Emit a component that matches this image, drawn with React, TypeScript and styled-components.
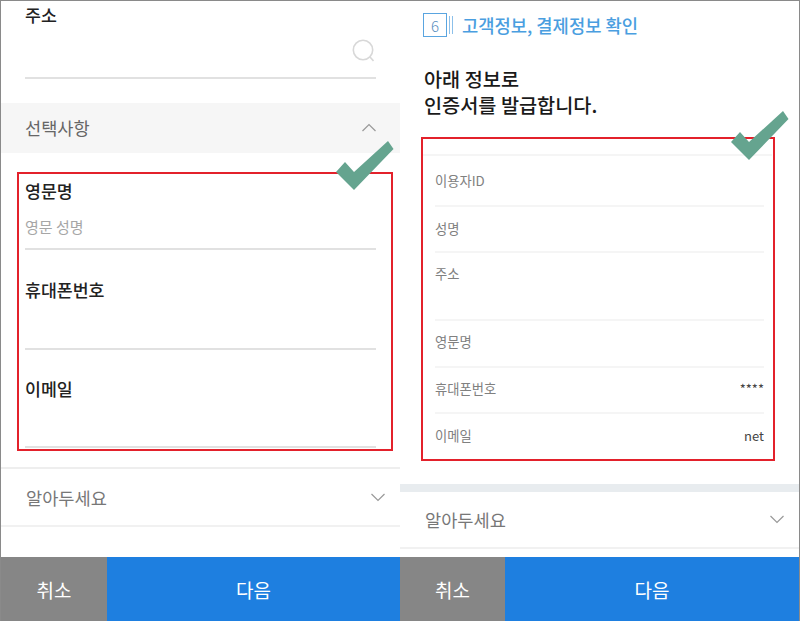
import React from "react";
import styled, { createGlobalStyle } from "styled-components";

const GlobalStyle = createGlobalStyle`
  html, body {
    margin: 0;
    padding: 0;
    background: #fff;
    font-family: "Noto Sans CJK KR", "Noto Sans", sans-serif;
  }
  * { box-sizing: border-box; }
`;

const Page = styled.div`
  position: relative;
  width: 800px;
  height: 621px;
  overflow: hidden;
  display: grid;
  grid-template-columns: 399px 399px;
  border-top: 1px solid #8a8a8a;
  border-left: 1px solid #8a8a8a;
  border-right: 1px solid #8a8a8a;
`;

const Phone = styled.section`
  position: relative;
  display: flex;
  flex-direction: column;
  height: 620px;
`;

const Body = styled.div`
  flex: 1;
  display: flex;
  flex-direction: column;
`;

const Field = styled.div<{ $height: number; $top?: number }>`
  height: ${(p) => p.$height}px;
  margin: ${(p) => p.$top ?? 0}px 24px 0;
  border-bottom: 2px solid #e1e1e1;
  display: flex;
  flex-direction: column;
`;

const FieldLabel = styled.div`
  font-size: 17.3px;
  line-height: 24px;
  font-weight: 500;
  color: #222;
`;

const Placeholder = styled.div`
  margin-top: 13px;
  font-size: 15px;
  line-height: 22px;
  color: #a6a6a6;
`;

const SearchRow = styled.div`
  display: flex;
  justify-content: flex-end;
  margin: 12px 2px 0 0;
`;

const AccordionOpen = styled.div`
  height: 50px;
  margin-top: 24px;
  margin-bottom: 26px;
  padding: 0 24px 2px;
  background: #f6f6f6;
  display: flex;
  align-items: center;
  justify-content: space-between;
  font-size: 17.6px;
  color: #666;
`;

const Accordion = styled.div<{ $height: number; $bottom: number; $topLine?: boolean }>`
  height: ${(p) => p.$height}px;
  margin-bottom: ${(p) => p.$bottom}px;
  padding: 0 15px 0 25px;
  display: flex;
  align-items: center;
  justify-content: space-between;
  font-size: 17.6px;
  color: #777;
  border-top: ${(p) => (p.$topLine ? "2px solid #eeeeee" : "none")};
  border-bottom: 2px solid #f1f1f1;
`;

const Footer = styled.div<{ $cancel: number }>`
  display: grid;
  grid-template-columns: ${(p) => p.$cancel}px 1fr;
  height: 64px;
  font-size: 19px;
  color: #fff;
`;

const CancelButton = styled.div`
  background: #868686;
  display: flex;
  align-items: center;
  justify-content: center;
`;

const NextButton = styled.div`
  background: #1e7fe0;
  display: flex;
  align-items: center;
  justify-content: center;
`;

const StepRow = styled.div`
  display: flex;
  align-items: center;
  height: 24px;
  margin: 12px 0 0 23px;
`;

const StepBox = styled.div`
  width: 24px;
  height: 24px;
  border: 1px solid #5aa5e0;
  color: #5a8fc0;
  font-size: 15px;
  font-weight: 300;
  display: flex;
  align-items: center;
  justify-content: center;
`;

const StepBars = styled.div`
  width: 4px;
  height: 18px;
  margin-left: 2px;
  border-left: 1px solid #8cc0ea;
  border-right: 1px solid #8cc0ea;
`;

const StepTitle = styled.div`
  margin-left: 9px;
  font-size: 17.7px;
  font-weight: 500;
  color: #4a9ee0;
  white-space: nowrap;
`;

const Heading = styled.h2`
  margin: 29px 0 0 24px;
  font-size: 19.7px;
  line-height: 26px;
  font-weight: 500;
  color: #1a1a1a;
`;

const InfoList = styled.div`
  margin: 36px 27px 0 22px;
  border-top: 2px solid #f5f5f5;
`;

const InfoRow = styled.div<{ $height: number; $lift?: number; $tall?: boolean; $last?: boolean }>`
  height: ${(p) => p.$height}px;
  margin: 0 8px 0 13px;
  padding-top: ${(p) => (p.$tall ? 11 : 0)}px;
  padding-bottom: ${(p) => p.$lift ?? 0}px;
  display: flex;
  align-items: ${(p) => (p.$tall ? "flex-start" : "center")};
  justify-content: space-between;
  font-size: 13.3px;
  color: #808080;
  border-bottom: ${(p) => (p.$last ? "none" : "2px solid #f5f5f5")};
`;

const InfoValue = styled.span`
  color: #444;
  font-size: 13px;
`;

const Band = styled.div`
  height: 8px;
  margin-top: 24px;
  background: #e8ecef;
`;

const RedBox = styled.div<{ $left: number; $top: number; $width: number; $height: number }>`
  position: absolute;
  left: ${(p) => p.$left}px;
  top: ${(p) => p.$top}px;
  width: ${(p) => p.$width}px;
  height: ${(p) => p.$height}px;
  border: 2px solid #e3212b;
  pointer-events: none;
`;

const CheckMark = styled.svg<{ $left: number; $top: number }>`
  position: absolute;
  left: ${(p) => p.$left}px;
  top: ${(p) => p.$top}px;
`;

const Chevron = ({ up }: { up?: boolean }) => (
  <svg width="14" height="9" viewBox="0 0 14 9" fill="none" stroke="#999" strokeWidth="1.2">
    <path d={up ? "M0.5 8 L7 1.5 L13.5 8" : "M0.5 1 L7 7.5 L13.5 1"} />
  </svg>
);

const SearchIcon = () => (
  <svg width="22" height="23" viewBox="0 0 22 23" fill="none" stroke="#d8d8d8" strokeWidth="1.6">
    <circle cx="11" cy="11" r="9.7" />
    <path d="M18 18 L21.5 22" />
  </svg>
);

const Check = ({ left, top }: { left: number; top: number }) => (
  <CheckMark $left={left} $top={top} width="58" height="50" viewBox="0 0 58 50">
    <path d="M0 31 L9 21 L18 31 L52 0 L57.5 8 L18 49 Z" fill="#65a48f" />
  </CheckMark>
);

export default function App() {
  return (
    <>
      <GlobalStyle />
      <Page>
        <Phone>
          <Body>
            <Field $height={76} $top={2}>
              <FieldLabel>주소</FieldLabel>
              <SearchRow>
                <SearchIcon />
              </SearchRow>
            </Field>
            <AccordionOpen>
              선택사항
              <Chevron up />
            </AccordionOpen>
            <Field $height={71}>
              <FieldLabel>영문명</FieldLabel>
              <Placeholder>영문 성명</Placeholder>
            </Field>
            <Field $height={72} $top={28}>
              <FieldLabel>휴대폰번호</FieldLabel>
            </Field>
            <Field $height={71} $top={27}>
              <FieldLabel>이메일</FieldLabel>
            </Field>
          </Body>
          <Accordion $height={60} $bottom={30} $topLine>
            알아두세요
            <Chevron />
          </Accordion>
          <Footer $cancel={106}>
            <CancelButton>취소</CancelButton>
            <NextButton>다음</NextButton>
          </Footer>
          <RedBox $left={16} $top={171} $width={376} $height={279} />
          <Check left={335} top={140} />
        </Phone>
        <Phone>
          <Body>
            <StepRow>
              <StepBox>6</StepBox>
              <StepBars />
              <StepTitle>고객정보, 결제정보 확인</StepTitle>
            </StepRow>
            <Heading>
              아래 정보로
              <br />
              인증서를 발급합니다.
            </Heading>
            <InfoList>
              <InfoRow $height={51}>이용자ID</InfoRow>
              <InfoRow $height={46} $lift={2}>
                성명
              </InfoRow>
              <InfoRow $height={68} $tall>
                주소
              </InfoRow>
              <InfoRow $height={47} $lift={4}>
                영문명
              </InfoRow>
              <InfoRow $height={46} $lift={4}>
                휴대폰번호
                <InfoValue>****</InfoValue>
              </InfoRow>
              <InfoRow $height={46} $lift={4} $last>
                이메일
                <InfoValue>net</InfoValue>
              </InfoRow>
            </InfoList>
            <Band />
          </Body>
          <Accordion $height={57} $bottom={8}>
            알아두세요
            <Chevron />
          </Accordion>
          <Footer $cancel={105}>
            <CancelButton>취소</CancelButton>
            <NextButton>다음</NextButton>
          </Footer>
          <RedBox $left={21} $top={136} $width={354} $height={324} />
          <Check left={331} top={110} />
        </Phone>
      </Page>
    </>
  );
}
